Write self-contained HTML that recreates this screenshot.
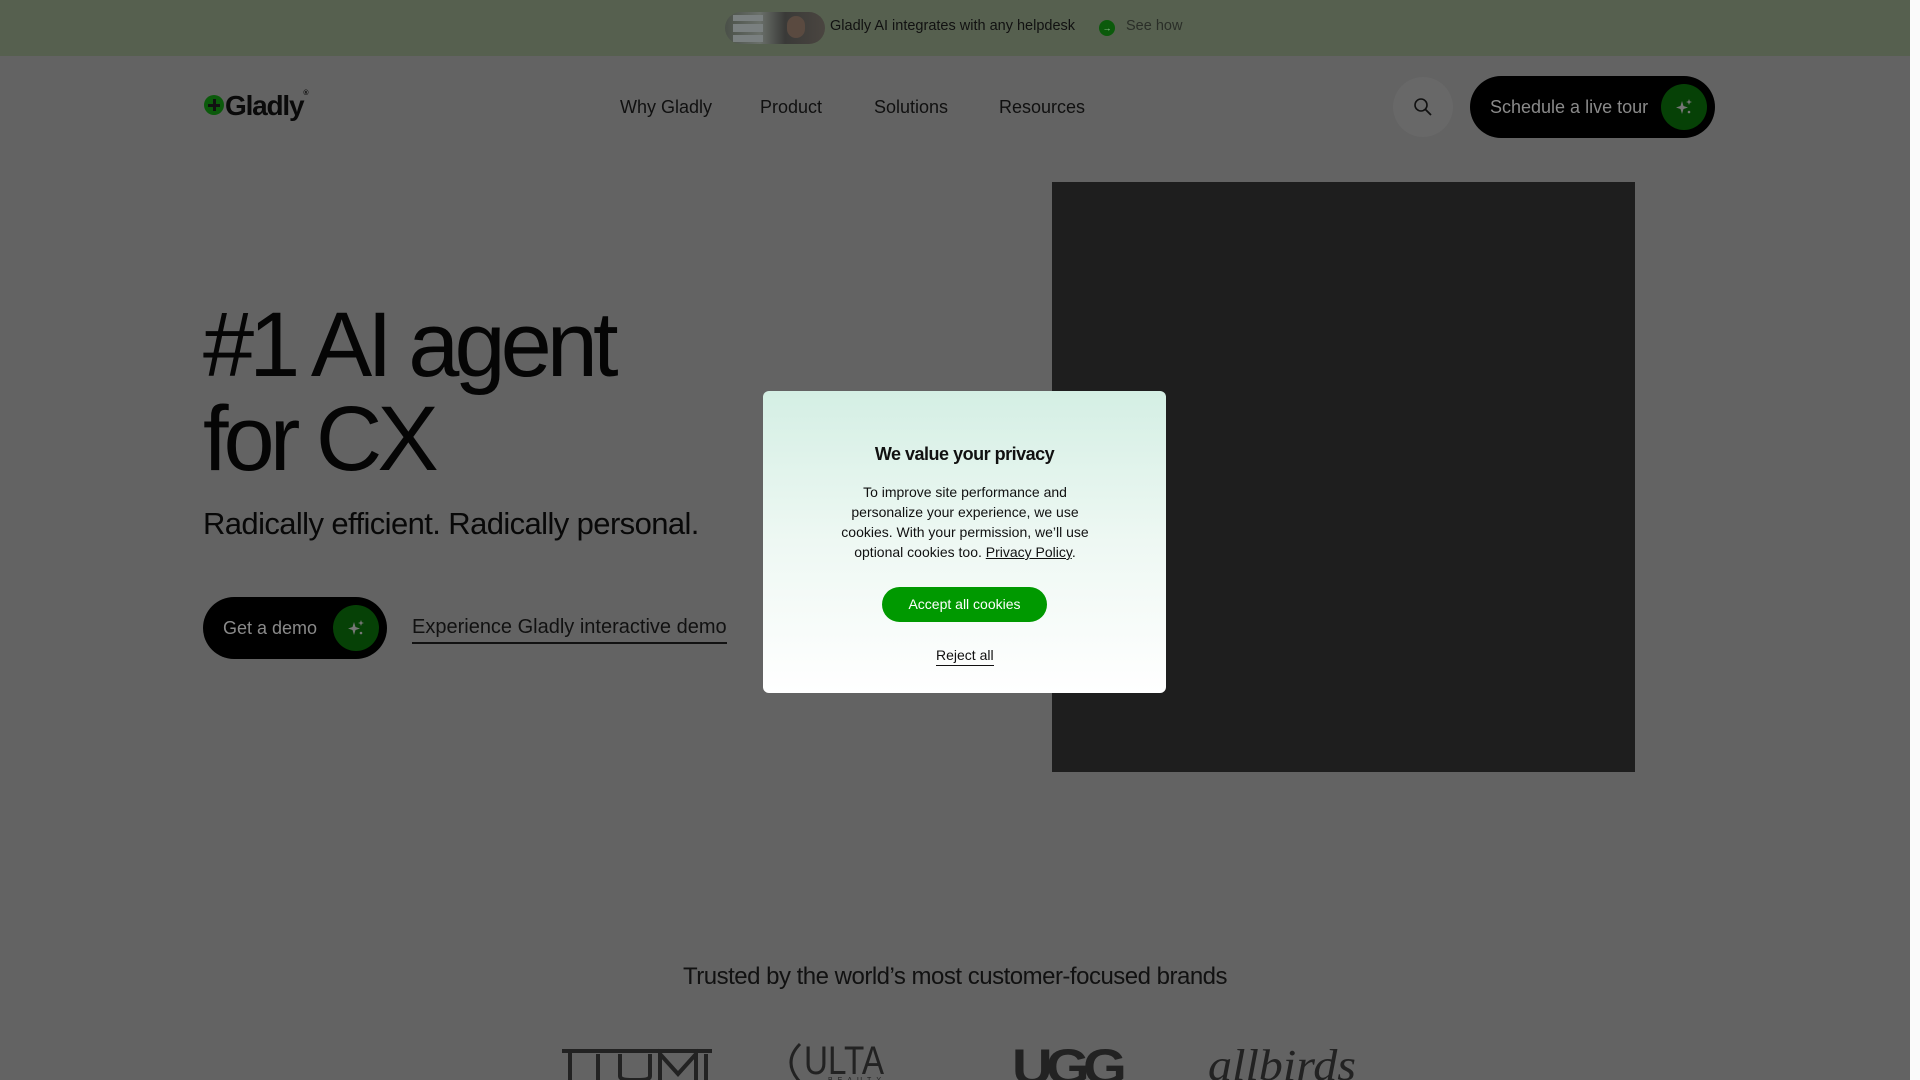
<!DOCTYPE html>
<html><head><meta charset="utf-8"><style>
*{margin:0;padding:0;box-sizing:border-box}
body{width:1920px;height:1080px;overflow:hidden;background:#636363;font-family:"Liberation Sans",sans-serif;color:#0a0a0a;position:relative}
.abs{position:absolute}
.banner{left:0;top:0;width:1910px;height:56px;background:#56604f}
.sb{left:1910px;top:0;width:10px;height:1080px;background:#fafafa}
.nav{font-size:18px;top:97px;color:#101010}
</style></head><body>
<div class="abs banner"></div>
<div class="abs sb"></div>
<div class="abs" style="left:725px;top:12px;width:100px;height:32px;border-radius:16px;background:linear-gradient(90deg,#4a5048 0%,#6a706a 35%,#3a3a38 60%,#4a4540 100%);overflow:hidden">
 <div class="abs" style="left:8px;top:3px;width:30px;height:6px;background:#7a8080"></div>
 <div class="abs" style="left:8px;top:12px;width:30px;height:8px;background:#7a8080"></div>
 <div class="abs" style="left:8px;top:23px;width:30px;height:7px;background:#7a8080"></div>
 <div class="abs" style="left:62px;top:4px;width:18px;height:22px;border-radius:9px;background:#5a4a40"></div>
</div>
<div class="abs" style="left:830px;top:18px;font-size:14.5px;color:#111">Gladly AI integrates with any helpdesk</div>
<div class="abs" style="left:1099px;top:20px;width:16px;height:16px;border-radius:50%;background:#0b5a0b;color:#9c9;font-size:9px;text-align:center;line-height:16px">→</div>
<div class="abs" style="left:1126px;top:18px;font-size:14.5px;color:#2a2e28">See how</div>

<div class="abs" style="left:204px;top:95px;width:20px;height:20px;border-radius:50%;background:#0b5a0b"><div class="abs" style="left:4px;top:9px;width:12px;height:2.5px;background:#111"></div><div class="abs" style="left:9px;top:4px;width:2.5px;height:12px;background:#111"></div></div>
<div class="abs" style="left:225px;top:90px;font-size:28px;font-weight:bold;letter-spacing:-1.2px;color:#0a0a0a">Gladly<span style="font-size:7px;vertical-align:top">®</span></div>

<div class="abs nav" style="left:620px">Why Gladly</div>
<div class="abs nav" style="left:760px">Product</div>
<div class="abs nav" style="left:874px">Solutions</div>
<div class="abs nav" style="left:999px">Resources</div>

<div class="abs" style="left:1393px;top:77px;width:60px;height:60px;border-radius:50%;background:#686868"></div>
<svg class="abs" style="left:1413px;top:97px" width="20" height="20" viewBox="0 0 20 20"><circle cx="8" cy="8" r="6" fill="none" stroke="#111" stroke-width="1.6"/><path d="M12.5 12.5L18 18" stroke="#111" stroke-width="1.8"/></svg>
<div class="abs" style="left:1470px;top:76px;width:245px;height:62px;border-radius:31px;background:#000"></div>
<div class="abs" style="left:1490px;top:97px;font-size:18px;color:#8a8a8a">Schedule a live tour</div>
<div class="abs" style="left:1661px;top:84px;width:46px;height:46px;border-radius:50%;background:#064106"></div>
<svg class="abs" style="left:1674px;top:97px" width="20" height="20" viewBox="0 0 20 20"><path d="M8 4L9.5 9 14 10.5 9.5 12 8 17 6.5 12 2 10.5 6.5 9Z" fill="#777"/><path d="M15 2L15.8 4.2 18 5 15.8 5.8 15 8 14.2 5.8 12 5 14.2 4.2Z" fill="#777"/><circle cx="15" cy="15" r="1.3" fill="#777"/></svg>

<div class="abs" style="left:203px;top:298px;font-size:92px;line-height:94px;letter-spacing:-5px;color:#050505">#1 AI agent<br>for CX</div>
<div class="abs" style="left:203px;top:506px;font-size:31px;letter-spacing:-0.6px;color:#080808">Radically efficient. Radically personal.</div>

<div class="abs" style="left:203px;top:597px;width:184px;height:62px;border-radius:31px;background:#000"></div>
<div class="abs" style="left:223px;top:618px;font-size:18px;color:#8a8a8a">Get a demo</div>
<div class="abs" style="left:333px;top:605px;width:46px;height:46px;border-radius:50%;background:#064106"></div>
<svg class="abs" style="left:346px;top:618px" width="20" height="20" viewBox="0 0 20 20"><path d="M8 4L9.5 9 14 10.5 9.5 12 8 17 6.5 12 2 10.5 6.5 9Z" fill="#777"/><path d="M15 2L15.8 4.2 18 5 15.8 5.8 15 8 14.2 5.8 12 5 14.2 4.2Z" fill="#777"/><circle cx="15" cy="15" r="1.3" fill="#777"/></svg>
<div class="abs" style="left:412px;top:616px;font-size:20px;color:#111;border-bottom:2px solid #111;padding-bottom:3px">Experience Gladly interactive demo</div>

<div class="abs" style="left:1052px;top:182px;width:583px;height:590px;background:#1e1e1e"></div>

<div class="abs" style="left:763px;top:391px;width:403px;height:302px;border-radius:6px;background:linear-gradient(180deg,#d4efe4 0%,#eef8f3 50%,#ffffff 100%)"></div>
<div class="abs" style="left:763px;top:444px;width:403px;text-align:center;font-size:18px;font-weight:bold;letter-spacing:-0.5px;color:#111">We value your privacy</div>
<div class="abs" style="left:832px;top:482px;width:266px;text-align:center;font-size:14px;line-height:20px;color:#111">To improve site performance and personalize your experience, we use cookies. With your permission, we’ll use optional cookies too. <u>Privacy Policy</u>.</div>
<div class="abs" style="left:882px;top:587px;width:165px;height:35px;border-radius:18px;background:#009900;color:#fff;font-size:14px;text-align:center;line-height:35px">Accept all cookies</div>
<div class="abs" style="left:936px;top:647px;font-size:14px;color:#111;border-bottom:1.5px solid #111;padding-bottom:2px">Reject all</div>

<div class="abs" style="left:0;top:963px;width:1910px;text-align:center;font-size:24px;letter-spacing:-0.5px;color:#111">Trusted by the world’s most customer-focused brands</div>

<svg class="abs" style="left:560px;top:1040px" width="800" height="40">
<g fill="none" stroke="#222" stroke-width="4"><path d="M2 11H152M10 11V40M38 14V40M60 14V36Q60 40 70 40H80Q90 40 90 36V14M100 40V14L118 34 136 14V40M146 14V40"/></g>
<path d="M240 4Q222 22 240 42" fill="none" stroke="#222" stroke-width="3"/>
<text x="244" y="34" font-family="Liberation Sans Narrow,Liberation Sans" font-size="40" fill="#222" textLength="80" lengthAdjust="spacingAndGlyphs">ULTA</text>
<text x="268" y="42" font-family="Liberation Sans" font-size="7" fill="#222" letter-spacing="5">BEAUTY</text>
<text x="452" y="44" font-family="Liberation Sans" font-size="50" font-weight="bold" fill="#222" letter-spacing="-6" textLength="108" lengthAdjust="spacingAndGlyphs">UGG</text>
<text x="648" y="40" font-family="Liberation Serif" font-style="italic" font-size="44" fill="#222" textLength="148" lengthAdjust="spacingAndGlyphs">allbirds</text>
</svg>
</body></html>
